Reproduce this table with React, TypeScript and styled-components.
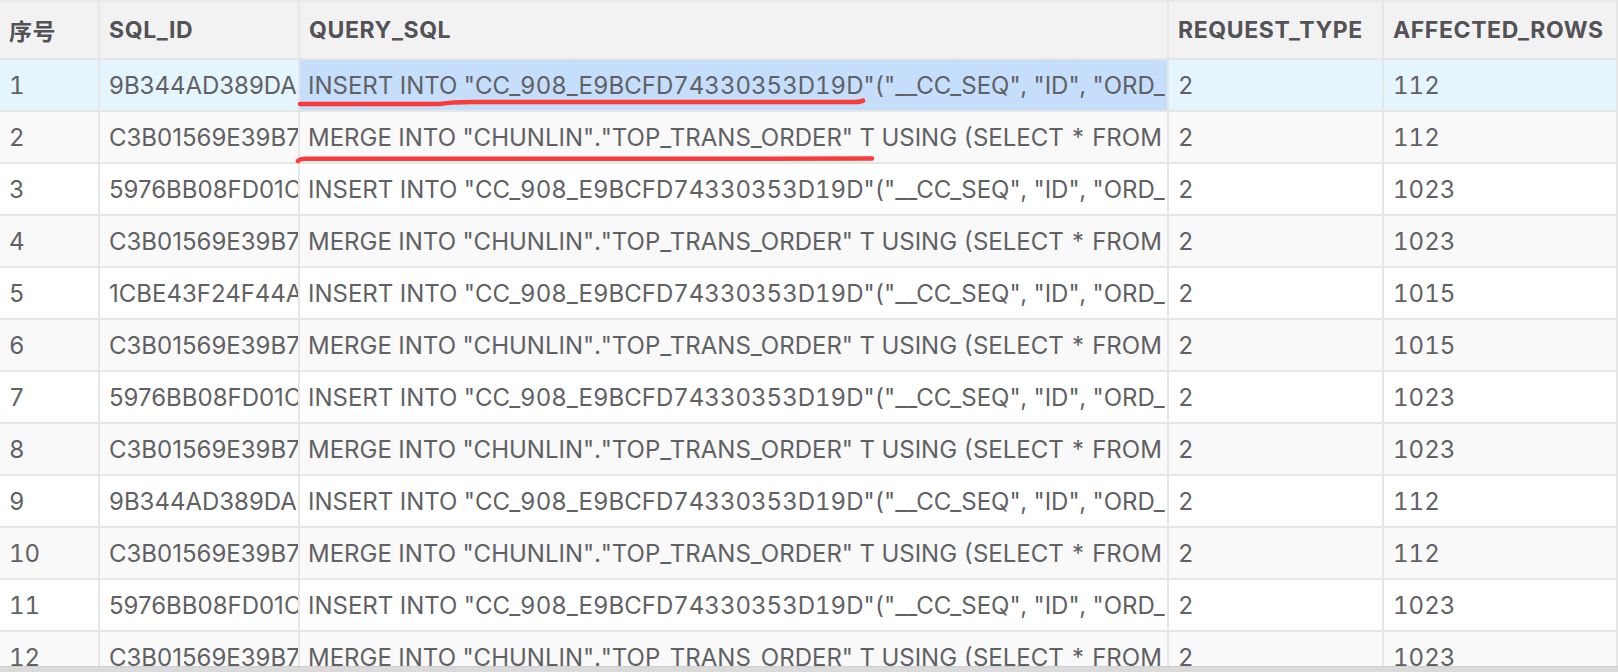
import React from 'react';
import styled, {createGlobalStyle} from 'styled-components';

const GlobalStyle = createGlobalStyle`
  html, body {
    margin: 0;
    padding: 0;
    background: #fff;
  }
  body {
    font-family: Inter, "Noto Sans CJK SC", sans-serif;
  }
`;

const INSERT_SQL = 'INSERT INTO "CC_908_E9BCFD74330353D19D"("__CC_SEQ", "ID", "ORD_ID", "USER_ID", "AMOUNT") VALUES (?, ?, ?, ?, ?)';
const MERGE_SQL = 'MERGE INTO "CHUNLIN"."TOP_TRANS_ORDER" T USING (SELECT * FROM (SELECT "ID", "ORD_ID" FROM "CC_908"))';

type Row = {seq: number; sqlId: string; sql: string; type: number; rows: number};

const rows: Row[] = [
  {seq: 1, sqlId: '9B344AD389DAE71C0F2B', sql: INSERT_SQL, type: 2, rows: 112},
  {seq: 2, sqlId: 'C3B01569E39B7A4D21E0', sql: MERGE_SQL, type: 2, rows: 112},
  {seq: 3, sqlId: '5976BB08FD01C39E8A44', sql: INSERT_SQL, type: 2, rows: 1023},
  {seq: 4, sqlId: 'C3B01569E39B7A4D21E0', sql: MERGE_SQL, type: 2, rows: 1023},
  {seq: 5, sqlId: '1CBE43F24F44A90D7B31', sql: INSERT_SQL, type: 2, rows: 1015},
  {seq: 6, sqlId: 'C3B01569E39B7A4D21E0', sql: MERGE_SQL, type: 2, rows: 1015},
  {seq: 7, sqlId: '5976BB08FD01C39E8A44', sql: INSERT_SQL, type: 2, rows: 1023},
  {seq: 8, sqlId: 'C3B01569E39B7A4D21E0', sql: MERGE_SQL, type: 2, rows: 1023},
  {seq: 9, sqlId: '9B344AD389DAE71C0F2B', sql: INSERT_SQL, type: 2, rows: 112},
  {seq: 10, sqlId: 'C3B01569E39B7A4D21E0', sql: MERGE_SQL, type: 2, rows: 112},
  {seq: 11, sqlId: '5976BB08FD01C39E8A44', sql: INSERT_SQL, type: 2, rows: 1023},
  {seq: 12, sqlId: 'C3B01569E39B7A4D21E0', sql: MERGE_SQL, type: 2, rows: 1023},
];

const columns = ['序号', 'SQL_ID', 'QUERY_SQL', 'REQUEST_TYPE', 'AFFECTED_ROWS'];

const Page = styled.div`
  position: relative;
  height: 672px;
  display: flex;
  flex-direction: column;
  overflow: hidden;
`;

const TableArea = styled.div`
  flex: 1;
  overflow: hidden;
`;

const Grid = styled.div`
  display: grid;
  grid-template-columns: 100px 200px 869px 215px 234px;
`;

const HeadCell = styled.div`
  box-sizing: border-box;
  height: 60px;
  padding: 0 9px;
  display: flex;
  align-items: center;
  background: #f2f2f2;
  border-top: 2px solid #e9e9e9;
  border-bottom: 2px solid #e6e6e6;
  border-right: 2px solid #e6e6e6;
  color: #535357;
  font-size: 23px;
  font-weight: 700;
  letter-spacing: 0.6px;
  white-space: nowrap;
  overflow: hidden;
`;

const Cell = styled.div<{$bg: string; $pad?: number; $proportional?: boolean}>`
  box-sizing: border-box;
  height: 52px;
  padding: 0 0 0 ${p => p.$pad ?? 9}px;
  display: flex;
  align-items: center;
  background: ${p => p.$bg};
  border-bottom: 2px solid #e6e6e6;
  border-right: 2px solid #e6e6e6;
  color: #616165;
  font-size: 24px;
  font-weight: 400;
  font-variant-numeric: ${p => (p.$proportional ? 'normal' : 'tabular-nums')};
  white-space: nowrap;
  overflow: hidden;
`;

const ScrollBar = styled.div`
  height: 6px;
  flex: none;
  background: #dadada;
  border-top: 1px solid #cfcfcf;
  box-sizing: border-box;
`;

const Marks = styled.svg`
  position: absolute;
  left: 0;
  top: 0;
  pointer-events: none;
`;

function rowBg(index: number): string {
  if (index === 0) return '#e5f5fd';
  return index % 2 === 1 ? '#f9f9f9' : '#ffffff';
}

export default function App(): React.ReactElement {
  return (
    <Page>
      <GlobalStyle/>
      <TableArea>
        <Grid>
          {columns.map(c => <HeadCell key={c}>{c}</HeadCell>)}
          {rows.map((r, i) => {
            const bg = rowBg(i);
            return (
              <React.Fragment key={r.seq}>
                <Cell $bg={bg}>{r.seq}</Cell>
                <Cell $bg={bg} $proportional>{r.sqlId}</Cell>
                <Cell $bg={i === 0 ? '#c4defb' : bg} $pad={8}>{r.sql}</Cell>
                <Cell $bg={bg}>{r.type}</Cell>
                <Cell $bg={bg}>{r.rows}</Cell>
              </React.Fragment>
            );
          })}
        </Grid>
      </TableArea>
      <ScrollBar/>
      {/* hand drawn red underlines on top of the table */}
      <Marks width="1618" height="672" viewBox="0 0 1618 672">
        <path d="M300 104 L440 104 Q452 102 472 102 L856 102 Q861 101.8 863 100.5"
              fill="none" stroke="#fb3a3a" strokeWidth="4.5" strokeLinecap="round"/>
        <path d="M298 161 Q300 158.8 306 158.8 L872 158.6"
              fill="none" stroke="#fb3a3a" strokeWidth="4.5" strokeLinecap="round"/>
      </Marks>
    </Page>
  );
}
